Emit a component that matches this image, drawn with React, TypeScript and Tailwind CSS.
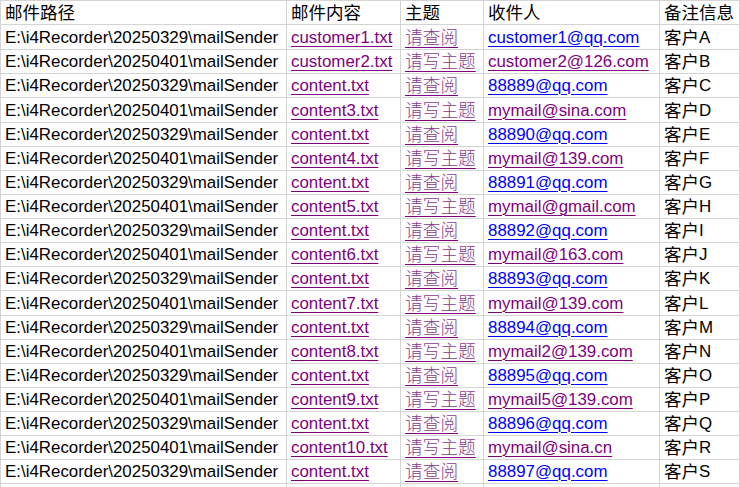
import React from "react";

type Row = {
  path: string;
  content: string;
  subject: string;
  mail: string;
  blue: boolean;
  note: string;
};

const letters = "ABCDEFGHIJKLMNOPQRS".split("");
const rows: Row[] = [
  ["20250329", "customer1.txt", "请查阅", "customer1@qq.com", true],
  ["20250401", "customer2.txt", "请写主题", "customer2@126.com", false],
  ["20250329", "content.txt", "请查阅", "88889@qq.com", true],
  ["20250401", "content3.txt", "请写主题", "mymail@sina.com", false],
  ["20250329", "content.txt", "请查阅", "88890@qq.com", true],
  ["20250401", "content4.txt", "请写主题", "mymail@139.com", false],
  ["20250329", "content.txt", "请查阅", "88891@qq.com", true],
  ["20250401", "content5.txt", "请写主题", "mymail@gmail.com", false],
  ["20250329", "content.txt", "请查阅", "88892@qq.com", true],
  ["20250401", "content6.txt", "请写主题", "mymail@163.com", false],
  ["20250329", "content.txt", "请查阅", "88893@qq.com", true],
  ["20250401", "content7.txt", "请写主题", "mymail@139.com", false],
  ["20250329", "content.txt", "请查阅", "88894@qq.com", true],
  ["20250401", "content8.txt", "请写主题", "mymail2@139.com", false],
  ["20250329", "content.txt", "请查阅", "88895@qq.com", true],
  ["20250401", "content9.txt", "请写主题", "mymail5@139.com", false],
  ["20250329", "content.txt", "请查阅", "88896@qq.com", true],
  ["20250401", "content10.txt", "请写主题", "mymail@sina.cn", false],
  ["20250329", "content.txt", "请查阅", "88897@qq.com", true],
].map((r, i) => ({
  path: `E:\\i4Recorder\\${r[0]}\\mailSender`,
  content: r[1] as string,
  subject: r[2] as string,
  mail: r[3] as string,
  blue: r[4] as boolean,
  note: letters[i],
}));

const tall = new Set([0, 3, 11]);

const cell =
  "border-r border-b border-[#d4d4d4] pl-[4px] flex items-end pb-[1px] overflow-hidden whitespace-nowrap";

export default function App() {
  return (
    <div
      className="w-[740px] h-[487px] overflow-hidden bg-white text-black text-[16.9px] leading-[20px]"
      style={{ fontFamily: '"Liberation Sans", "Noto Sans CJK SC", sans-serif' }}
    >
      <div className="grid grid-cols-[287px_114px_83px_176px_80px] border-t border-[#d4d4d4]">
        <div className={`${cell} border-l h-[24px]`}>
          <span className="text-[17.5px]">邮件路径</span>
        </div>
        <div className={`${cell} h-[24px]`}>
          <span className="text-[17.5px]">邮件内容</span>
        </div>
        <div className={`${cell} h-[24px]`}>
          <span className="text-[17.5px]">主题</span>
        </div>
        <div className={`${cell} h-[24px]`}>
          <span className="text-[17.5px]">收件人</span>
        </div>
        <div className={`${cell} h-[24px]`}>
          <span className="text-[17.5px]">备注信息</span>
        </div>
        {rows.map((r, i) => {
          const h = tall.has(i) ? "h-[25px]" : "h-[24px]";
          return (
            <React.Fragment key={i}>
              <div className={`${cell} border-l ${h}`}>{r.path}</div>
              <div className={`${cell} ${h}`}>
                <span className="text-[#800080] underline underline-offset-[3px] decoration-[1px]">
                  {r.content}
                </span>
              </div>
              <div className={`${cell} ${h}`}>
                <span className="text-[#8a3a8a] underline decoration-[#800080] underline-offset-[3px] decoration-[1px] text-[17.7px] font-light">
                  {r.subject}
                </span>
              </div>
              <div className={`${cell} ${h}`}>
                <span
                  className={`underline underline-offset-[3px] decoration-[1px] ${
                    r.blue ? "text-[#0000ff]" : "text-[#800080]"
                  }`}
                >
                  {r.mail}
                </span>
              </div>
              <div className={`${cell} ${h}`}>
                <span className="text-[17.5px]">客户</span>
                <span>{r.note}</span>
              </div>
            </React.Fragment>
          );
        })}
        <div className={`${cell} border-l h-[24px]`}></div>
        <div className={`${cell} h-[24px]`}></div>
        <div className={`${cell} h-[24px]`}></div>
        <div className={`${cell} h-[24px]`}></div>
        <div className={`${cell} h-[24px]`}></div>
      </div>
    </div>
  );
}
